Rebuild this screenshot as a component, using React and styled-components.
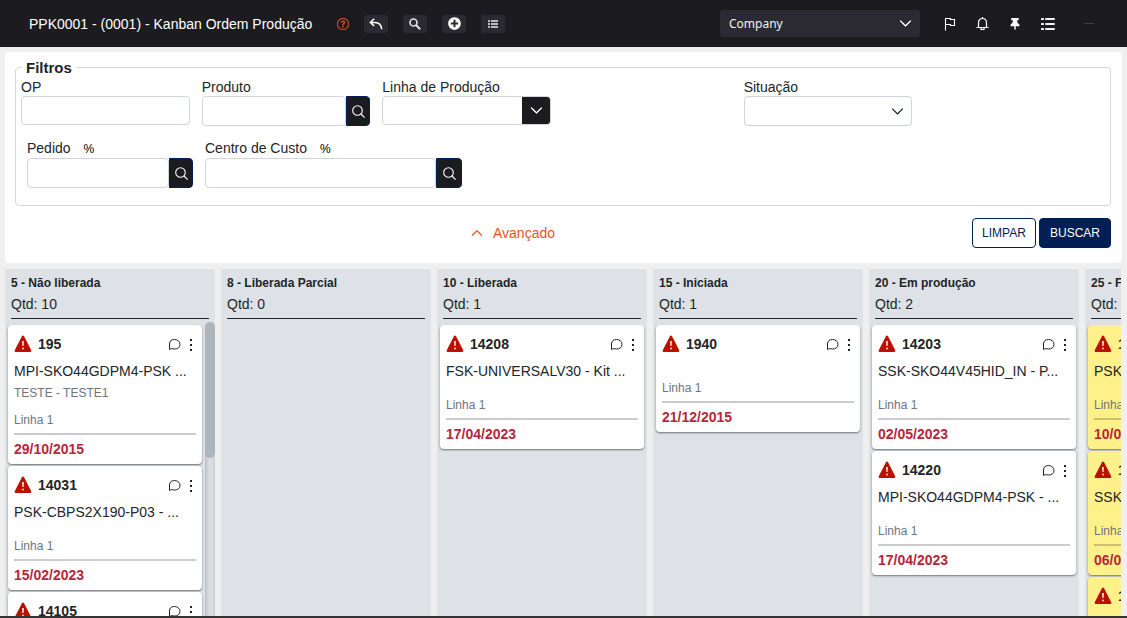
import React from 'react';
import styled, { createGlobalStyle } from 'styled-components';
import { BsChevronDown, BsChevronUp, BsQuestionCircle } from 'react-icons/bs';
import { FaPlusCircle, FaThumbtack } from 'react-icons/fa';

const Global = createGlobalStyle`
  * { box-sizing: border-box; }
  body {
    margin: 0;
    background: #efefef;
    color: #212529;
    font: 14px/17px "Liberation Sans", Arial, sans-serif;
  }
  button, input, select { font: inherit; color: inherit; }
  button { cursor: pointer; }
  svg { display: block; flex: none; }
`;

const Page = styled.div`
  height: 100vh;
  display: flex;
  flex-direction: column;
  overflow: hidden;
  border-bottom: 2px solid #333;
`;

/* Top bar */
const TopBar = styled.header`
  flex: none;
  height: 47px;
  display: flex;
  align-items: center;
  padding: 0 33px 0 29px;
  background: #1c1b20;
  color: #fff;
`;

const PageTitle = styled.h1`
  margin: 0 20px 0 0;
  min-width: 288px;
  font-size: 14px;
  line-height: 18px;
  font-weight: 400;
  white-space: nowrap;
`;

const PlainButton = styled.button`
  display: flex;
  padding: 0;
  border: 0;
  background: none;
  color: ${(p) => p.$color || 'inherit'};
`;

const Tools = styled.div`
  display: flex;
  gap: 15px;
  margin-left: 15px;
`;

const ToolButton = styled.button`
  width: 24px;
  height: 18px;
  display: flex;
  align-items: center;
  justify-content: center;
  padding: 0;
  border: 0;
  border-radius: 3px;
  background: #2b2a33;
  color: #fff;
`;

const SelectBox = styled.div`
  position: relative;
  display: flex;
`;

const SelectIcon = styled.span`
  position: absolute;
  top: ${(p) => (p.$dark ? '1px' : '0')};
  right: ${(p) => (p.$dark ? '1px' : '0')};
  bottom: ${(p) => (p.$dark ? '1px' : '0')};
  width: ${(p) => (p.$dark ? '28px' : '30px')};
  display: flex;
  align-items: center;
  justify-content: center;
  border-radius: 0 3px 3px 0;
  background: ${(p) => (p.$dark ? '#1c1b20' : 'transparent')};
  color: ${(p) => p.$color || '#fff'};
  pointer-events: none;
`;

const CompanySelect = styled.select`
  width: 200px;
  height: 27px;
  padding: 0 30px 0 9px;
  appearance: none;
  border: 0;
  border-radius: 3px;
  background: #2b2a33;
  color: #f1f1f1;
  font: 12px "Noto Sans", sans-serif;
`;

const TopRight = styled.div`
  margin-left: auto;
  display: flex;
  align-items: center;
`;

const Shortcuts = styled.nav`
  display: flex;
  align-items: center;
  gap: 20px;
  margin-left: 24px;
`;

const Avatar = styled.span`
  width: 10px;
  height: 1px;
  margin-left: 9px;
  background: #5a3a2c;
`;

/* Filter panel */
const Panel = styled.form`
  flex: none;
  margin: 5px 5px 6px;
  padding: 7px 11px 15px 10px;
  border-radius: 4px;
  background: #fff;
`;

const Filters = styled.fieldset`
  margin: 0;
  min-width: 0;
  padding: 3px 17px 17px 5px;
  border: 1px solid #d5d8da;
  border-radius: 4px;
`;

const Legend = styled.legend`
  padding: 0 5px;
  font-size: 15px;
  font-weight: 700;
`;

const FilterRow = styled.div`
  display: grid;
  grid-template-columns: ${(p) => p.$columns};
  column-gap: 12px;
  padding-left: ${(p) => p.$indent || 0};
  & + & { margin-top: 14px; }
`;

const Field = styled.div`
  grid-column: ${(p) => p.$column || 'auto'};
  min-width: 0;
`;

const Label = styled.label`
  display: block;
  white-space: nowrap;
`;

const Percent = styled.span`
  margin-left: 13px;
  color: #000;
  font-size: 12px;
`;

const InputGroup = styled.div`
  display: flex;
`;

const control = `
  flex: 1;
  min-width: 0;
  width: 100%;
  padding: 0 8px;
  border: 1px solid #ced4da;
  border-radius: 4px;
  background: #fff;
`;

const TextInput = styled.input`
  ${control}
  height: ${(p) => (p.$compact ? '29px' : '30px')};
`;

const FilterSelect = styled.select`
  ${control}
  height: ${(p) => (p.$compact ? '29px' : '30px')};
  appearance: none;
`;

const LookupButton = styled.button`
  width: ${(p) => (p.$wide ? '26px' : '24px')};
  height: 30px;
  display: flex;
  align-items: center;
  justify-content: center;
  padding: 0;
  border: 1px solid #001f54;
  border-radius: 0 4px 4px 0;
  background: #1c1b20;
  color: #fff;
`;

const PanelFooter = styled.div`
  display: flex;
  align-items: center;
  gap: 3px;
  margin-top: 12px;
`;

const Advanced = styled.button`
  display: flex;
  align-items: center;
  gap: 10px;
  margin: 0 auto;
  padding: 0 0 0 42px;
  border: 0;
  background: none;
  color: #e8541e;
`;

const ActionButton = styled.button`
  width: ${(p) => (p.$primary ? '72px' : '64px')};
  height: 30px;
  padding: 0;
  border: 1px solid #001f54;
  border-radius: 4px;
  background: ${(p) => (p.$primary ? '#001f54' : '#fff')};
  color: ${(p) => (p.$primary ? '#fff' : '#001f54')};
  font-size: 12px;
`;

/* Board */
const Board = styled.main`
  flex: 1;
  min-height: 0;
  display: flex;
  gap: 6px;
  margin: 0 6px 0 5px;
  overflow: hidden;
`;

const ColumnBox = styled.section`
  flex: 0 0 210px;
  display: flex;
  flex-direction: column;
  overflow: hidden;
  background: #dee2e6;
`;

const ColumnHeader = styled.header`
  flex: none;
  margin: 0 6px;
  padding: 6px 0 5px;
  border-bottom: 1px solid #212529;
`;

const ColumnTitle = styled.h2`
  margin: 0 0 4px;
  font-size: 12px;
  line-height: 17px;
  font-weight: 700;
  white-space: nowrap;
`;

const Count = styled.p`
  margin: 0;
  white-space: pre;
`;

const ColumnBody = styled.div`
  flex: 1;
  min-height: 0;
  display: flex;
  padding: 3px 0 0 3px;
`;

const Cards = styled.div`
  flex: 1;
  min-width: 0;
  display: flex;
  flex-direction: column;
  gap: 2px;
  padding-top: 3px;
  padding-right: 3px;
`;

const Track = styled.div`
  width: 10px;
  background: linear-gradient(90deg, #bcc0c4, #d9dce0 40%, #d9dce0 70%, #c8ccd0);
  border-radius: 5px 5px 0 0;
`;

const Thumb = styled.div`
  height: 136px;
  border-radius: 5px;
  background: #adb5bd;
`;

const CardBox = styled.article`
  flex: none;
  padding: 0 6px 6px;
  border-radius: 4px;
  background: ${(p) => (p.$highlight ? '#fff18a' : '#fff')};
  box-shadow: 0 1px 2px rgba(0, 0, 0, 0.5);
`;

const CardHeader = styled.header`
  display: flex;
  align-items: center;
  height: 38px;
`;

const OrderNumber = styled.strong`
  margin-left: 6px;
  margin-right: auto;
`;

const CardActions = styled.div`
  display: flex;
  align-items: center;
  gap: 4px;
  margin-right: -1px;
`;

const Product = styled.p`
  margin: 0;
  white-space: nowrap;
`;

const Note = styled.p`
  margin: 6px 0 -6px;
  color: #6c757d;
  font-size: 12px;
  line-height: 15px;
`;

const Line = styled.p`
  margin: 18px 0 5px;
  color: #6c757d;
  font-size: 12px;
  line-height: 15px;
`;

const DueDate = styled.p`
  margin: 0;
  padding-top: 6px;
  border-top: 2px solid rgba(0, 0, 0, 0.2);
  color: #b8263a;
  font-weight: 700;
`;

const WarningIcon = () => (
  <svg width="18" height="18" viewBox="0 0 18 18" role="img" aria-label="Atrasada">
    <path d="M9 1.8 16.2 15.8H1.8Z" fill="#bb1100" stroke="#bb1100" strokeWidth="2.4" strokeLinejoin="round" />
    <path d="M8 6h2l-.3 5H8.3Z" fill="#f3d9d6" />
    <rect x="8" y="12.4" width="2" height="2" rx="1" fill="#f3d9d6" />
  </svg>
);

const BackIcon = () => (
  <svg width="14" height="12" viewBox="0 0 14 12" fill="none" stroke="currentColor" strokeWidth="1.5">
    <path d="M5.200 .8 1.300 4.400l3.900 3.600M1.500 4.400H6c4 0 6.300 2.700 6.700 6.800" />
  </svg>
);

const SearchIcon = () => (
  <svg width="13" height="13" viewBox="0 0 13 13" fill="none" stroke="currentColor" strokeWidth="1.100">
    <circle cx="5.500" cy="5.500" r="4.800" />
    <path d="m9 9 3.600 3.600" />
  </svg>
);

const ListIcon = () => (
  <svg width="10" height="8" viewBox="0 0 10 8" fill="#bdbdbd">
    {[0, 3, 6].map((y) => (
      <g key={y}>
        <rect x="0" y={y} width="2" height="2" />
        <rect x="3" y={y} width="7" height="2" />
      </g>
    ))}
  </svg>
);

const MenuIcon = () => (
  <svg width="14" height="12" viewBox="0 0 14 12" fill="#f0f0f0">
    {[0, 5, 10].map((y) => (
      <g key={y}>
        <rect x="0" y={y} width="3" height="2" rx=".5" />
        <rect x="4" y={y} width="10" height="2" rx="1" />
      </g>
    ))}
  </svg>
);

const FlagIcon = () => (
  <svg width="12" height="14" viewBox="0 0 12 14" fill="none" stroke="currentColor" strokeWidth="1.100">
    <path d="M1.500 13.500V1.500H6.500V2.500H10.500V8.500H6.500V7.500H1.500" />
  </svg>
);

const BellIcon = () => (
  <svg width="13" height="14" viewBox="0 0 13 14" fill="none" stroke="currentColor" strokeWidth="1.200">
    <path d="M.5 10.500h12M2.500 10.300V6C2.500 3.200 4 1.500 6.500 1.500S10.500 3.200 10.500 6v4.300M5 11v1.500h3V11M6.500 0v1.500" />
  </svg>
);

const ChatIcon = () => (
  <svg width="13" height="13" viewBox="0 0 13 13" fill="none" stroke="currentColor" strokeWidth="1">
    <path d="M1.500 11.500V6C1.500 3 3.500 1.500 6.500 1.500S12 3.500 12 6.500 9.500 11 6.500 11C5.500 11 4.500 10.800 3.800 10.500Z" />
  </svg>
);

const DotsIcon = () => (
  <svg width="12" height="14" viewBox="0 0 12 14" fill="currentColor">
    <rect x="5" y="2" width="2" height="2" />
    <rect x="5" y="7" width="2" height="2" />
    <rect x="5" y="12" width="2" height="2" />
  </svg>
);

const columns = [
  {
    title: '5 - Não liberada',
    count: 10,
    scroll: true,
    cards: [
      { id: '195', product: 'MPI-SKO44GDPM4-PSK ...', note: 'TESTE - TESTE1', date: '29/10/2015' },
      { id: '14031', product: 'PSK-CBPS2X190-P03 - ...', date: '15/02/2023' },
      { id: '14105' },
    ],
  },
  { title: '8 - Liberada Parcial', count: 0, cards: [] },
  {
    title: '10 - Liberada',
    count: 1,
    cards: [{ id: '14208', product: 'FSK-UNIVERSALV30 - Kit ...', date: '17/04/2023' }],
  },
  { title: '15 - Iniciada', count: 1, cards: [{ id: '1940', date: '21/12/2015' }] },
  {
    title: '20 - Em produção',
    count: 2,
    cards: [
      { id: '14203', product: 'SSK-SKO44V45HID_IN - P...', date: '02/05/2023' },
      { id: '14220', product: 'MPI-SKO44GDPM4-PSK - ...', date: '17/04/2023' },
    ],
  },
  {
    title: '25 - F',
    count: 3,
    cards: [
      { id: '14101', product: 'PSK-', date: '10/04/2023', highlight: true },
      { id: '14102', product: 'SSK-', date: '06/04/2023', highlight: true },
      { id: '14103', highlight: true },
    ],
  },
];

const Card = ({ id, product, note, date, highlight }) => (
  <CardBox $highlight={highlight}>
    <CardHeader>
      <WarningIcon />
      <OrderNumber>{id}</OrderNumber>
      <CardActions>
        <PlainButton aria-label="Comentários"><ChatIcon /></PlainButton>
        <PlainButton aria-label="Mais opções"><DotsIcon /></PlainButton>
      </CardActions>
    </CardHeader>
    {product && <Product>{product}</Product>}
    {note && <Note>{note}</Note>}
    {date && <Line>Linha 1</Line>}
    {date && <DueDate>{date}</DueDate>}
  </CardBox>
);

const Column = ({ title, count, cards, scroll }) => (
  <ColumnBox>
    <ColumnHeader>
      <ColumnTitle>{title}</ColumnTitle>
      <Count>Qtd: {count}</Count>
    </ColumnHeader>
    <ColumnBody>
      <Cards>{cards.map((card) => <Card key={card.id} {...card} />)}</Cards>
      {scroll && <Track><Thumb /></Track>}
    </ColumnBody>
  </ColumnBox>
);

const LookupField = ({ id, label, percent, wide }) => (
  <Field>
    <Label htmlFor={id}>{label}{percent && <Percent>%</Percent>}</Label>
    <InputGroup>
      <TextInput id={id} />
      <LookupButton type="button" $wide={wide} aria-label={`Pesquisar ${label}`}><SearchIcon /></LookupButton>
    </InputGroup>
  </Field>
);

export default function App() {
  return (
    <Page>
      <Global />
      <TopBar>
        <PageTitle>PPK0001 - (0001) - Kanban Ordem Produção</PageTitle>
        <PlainButton $color="#f0561d" aria-label="Ajuda"><BsQuestionCircle size={12} strokeWidth={0.4} /></PlainButton>
        <Tools>
          <ToolButton aria-label="Voltar"><BackIcon /></ToolButton>
          <ToolButton aria-label="Pesquisar">
            <svg width="12" height="12" viewBox="0 0 12 12" fill="none" stroke="#ddd" strokeWidth="1.700">
              <circle cx="4.500" cy="4.500" r="3.500" />
              <path d="m7 7 4.200 4.200" strokeWidth="2" />
            </svg>
          </ToolButton>
          <ToolButton aria-label="Adicionar"><FaPlusCircle size={13} /></ToolButton>
          <ToolButton aria-label="Lista"><ListIcon /></ToolButton>
        </Tools>
        <TopRight>
          <SelectBox>
            <CompanySelect aria-label="Empresa"><option>Company</option></CompanySelect>
            <SelectIcon><BsChevronDown size={13} strokeWidth={1} /></SelectIcon>
          </SelectBox>
          <Shortcuts aria-label="Atalhos">
            <PlainButton aria-label="Marcadores"><FlagIcon /></PlainButton>
            <PlainButton aria-label="Notificações"><BellIcon /></PlainButton>
            <PlainButton aria-label="Fixar"><FaThumbtack size={12} /></PlainButton>
            <PlainButton aria-label="Menu"><MenuIcon /></PlainButton>
            <Avatar />
          </Shortcuts>
        </TopRight>
      </TopBar>

      <Panel onSubmit={(e) => e.preventDefault()}>
        <Filters>
          <Legend>Filtros</Legend>
          <FilterRow $columns="repeat(6, minmax(0, 1fr))">
            <Field>
              <Label htmlFor="op">OP</Label>
              <TextInput id="op" $compact />
            </Field>
            <LookupField id="produto" label="Produto" />
            <Field>
              <Label htmlFor="linha">Linha de Produção</Label>
              <SelectBox>
                <FilterSelect id="linha" $compact />
                <SelectIcon $dark><BsChevronDown size={13} strokeWidth={1} /></SelectIcon>
              </SelectBox>
            </Field>
            <Field $column="5">
              <Label htmlFor="situacao">Situação</Label>
              <SelectBox>
                <FilterSelect id="situacao" />
                <SelectIcon $color="#343a40"><BsChevronDown size={13} strokeWidth={1} /></SelectIcon>
              </SelectBox>
            </Field>
          </FilterRow>
          <FilterRow $columns="166fr 257fr 619fr" $indent="6px">
            <LookupField id="pedido" label="Pedido" percent />
            <LookupField id="centro" label="Centro de Custo" percent wide />
          </FilterRow>
        </Filters>
        <PanelFooter>
          <Advanced type="button"><BsChevronUp size={12} strokeWidth={1} />Avançado</Advanced>
          <ActionButton type="button">LIMPAR</ActionButton>
          <ActionButton type="submit" $primary>BUSCAR</ActionButton>
        </PanelFooter>
      </Panel>

      <Board>
        {columns.map((column) => <Column key={column.title} {...column} />)}
      </Board>
    </Page>
  );
}
